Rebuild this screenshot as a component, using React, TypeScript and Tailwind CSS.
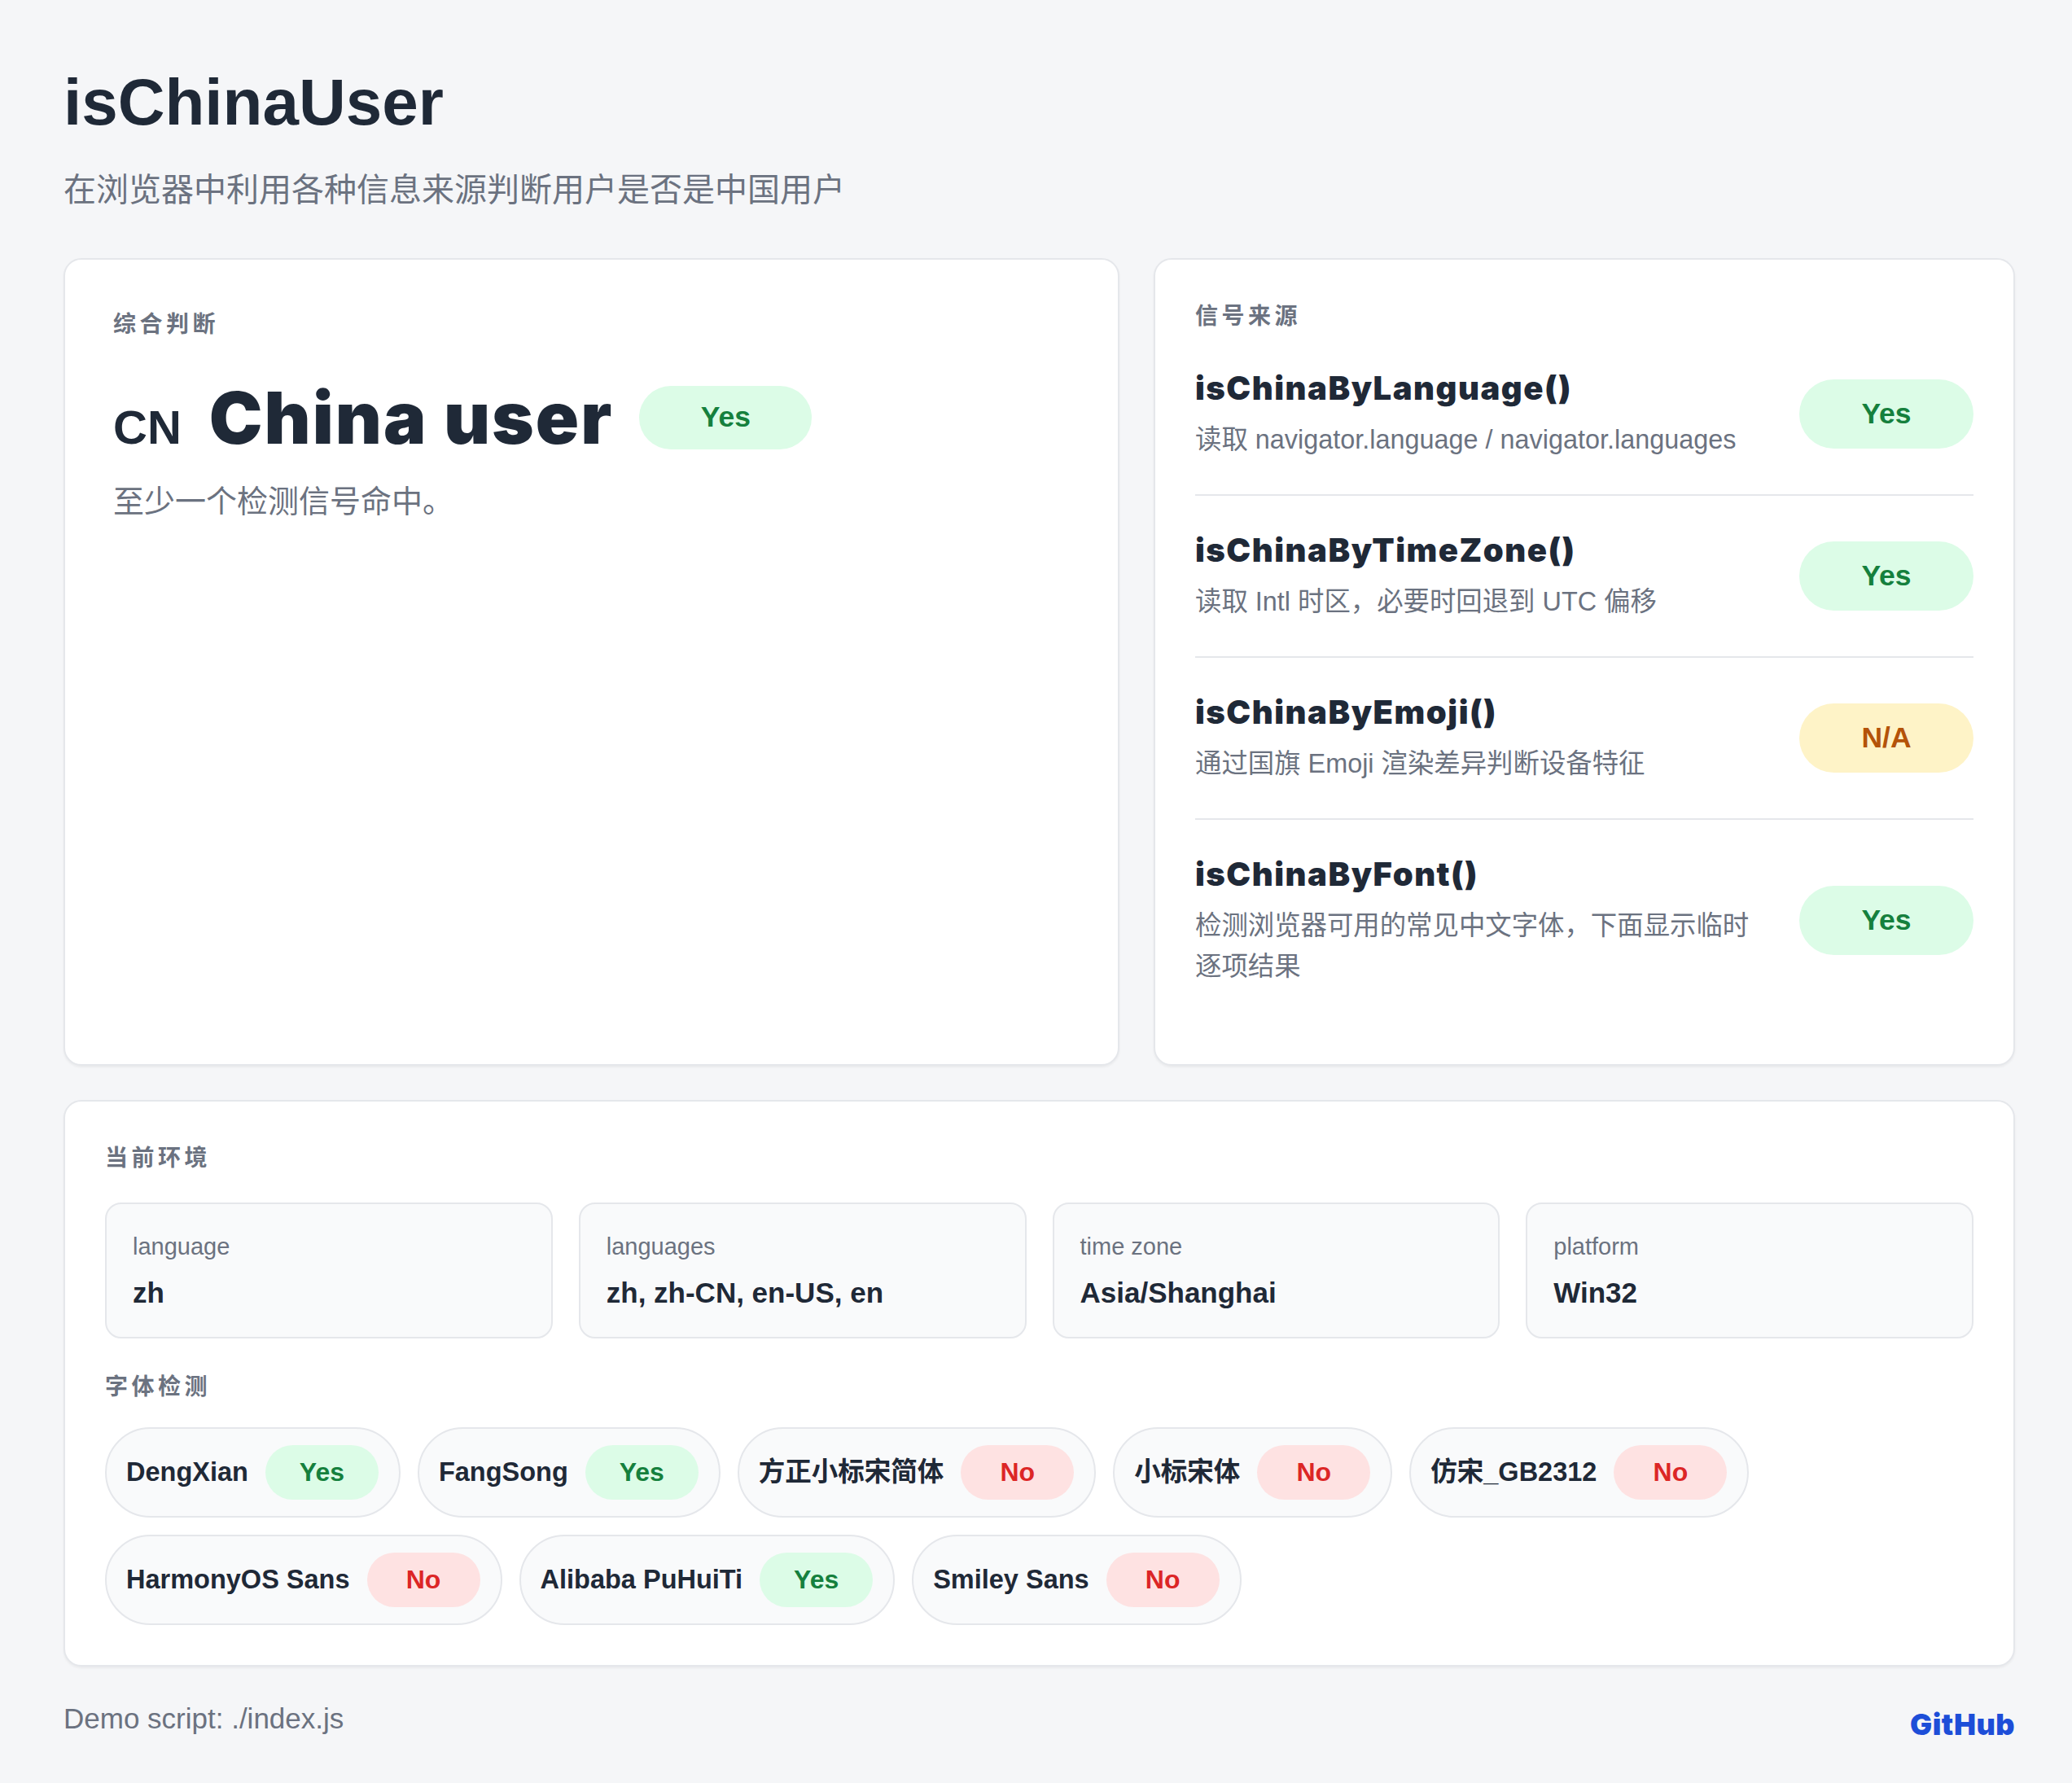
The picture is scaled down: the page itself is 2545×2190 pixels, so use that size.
import React from 'react';

type Verdict = 'yes' | 'no' | 'na';

const signals: { name: string; desc: string; verdict: Verdict }[] = [
    { name: 'isChinaByLanguage()', desc: '读取 navigator.language / navigator.languages', verdict: 'yes' },
    { name: 'isChinaByTimeZone()', desc: '读取 Intl 时区，必要时回退到 UTC 偏移', verdict: 'yes' },
    { name: 'isChinaByEmoji()', desc: '通过国旗 Emoji 渲染差异判断设备特征', verdict: 'na' },
    { name: 'isChinaByFont()', desc: '检测浏览器可用的常见中文字体，下面显示临时逐项结果', verdict: 'yes' },
];

const env = [
    { label: 'language', value: 'zh' },
    { label: 'languages', value: 'zh, zh-CN, en-US, en' },
    { label: 'time zone', value: 'Asia/Shanghai' },
    { label: 'platform', value: 'Win32' },
];

const fonts: { name: string; verdict: Verdict }[] = [
    { name: 'DengXian', verdict: 'yes' },
    { name: 'FangSong', verdict: 'yes' },
    { name: '方正小标宋简体', verdict: 'no' },
    { name: '小标宋体', verdict: 'no' },
    { name: '仿宋_GB2312', verdict: 'no' },
    { name: 'HarmonyOS Sans', verdict: 'no' },
    { name: 'Alibaba PuHuiTi', verdict: 'yes' },
    { name: 'Smiley Sans', verdict: 'no' },
];

const verdictText: Record<Verdict, string> = { yes: 'Yes', no: 'No', na: 'N/A' };
const verdictColor: Record<Verdict, string> = {
    yes: 'bg-[#dcfce7] text-[#15803d]',
    no: 'bg-[#fee2e2] text-[#dc2626]',
    na: 'bg-[#fef3c7] text-[#b45309]',
};

function Badge({ verdict, size }: { verdict: Verdict; size: 'lg' | 'md' | 'sm' }) {
    const dims =
        size === 'lg'
            ? 'h-[78px] w-[212px] text-[35.5px]'
            : size === 'md'
              ? 'h-[85px] w-[214px] text-[35.5px]'
              : 'h-[67px] w-[139px] text-[32px]';
    return (
        <span className={`flex shrink-0 items-center justify-center rounded-full font-bold leading-none ${dims} ${verdictColor[verdict]}`}>
            {verdictText[verdict]}
        </span>
    );
}

function Label({ children }: { children: React.ReactNode }) {
    return <div className="text-[28px] font-bold leading-[42px] tracking-[4.5px] text-[#6b7280]">{children}</div>;
}

function SummaryCard() {
    return (
        <div className="rounded-[22px] border-2 border-[#e5e7eb] bg-white p-[59px] shadow-[0_2px_3px_rgba(0,0,0,0.05)]">
            <Label>综合判断</Label>
            <div className="mt-[49px] flex items-baseline">
                <span className="mr-[34px] text-[58px] font-bold leading-none">CN</span>
                <span className="font-['Inter','Noto_Sans_CJK_SC',sans-serif] text-[88px] font-black leading-none tracking-[2px]">China user</span>
                <span className="ml-[32px] self-center">
                    <Badge verdict="yes" size="lg" />
                </span>
            </div>
            <p className="mt-[31px] text-[38px] leading-[57px] text-[#6b7280]">至少一个检测信号命中。</p>
        </div>
    );
}

function SignalsCard() {
    return (
        <div className="rounded-[22px] border-2 border-[#e5e7eb] bg-white px-[49px] pb-[53px] pt-[49px] shadow-[0_2px_3px_rgba(0,0,0,0.05)]">
            <Label>信号来源</Label>
            <div>
                {signals.map(s => (
                    <div key={s.name} className="flex items-center border-b-2 border-[#e5e7eb] py-[42px] last:border-b-0">
                        <div className="min-w-0 flex-1 pr-[44px]">
                            <div className="font-['Inter','Noto_Sans_CJK_SC',sans-serif] text-[40px] font-black leading-[50px] tracking-[1.5px]">{s.name}</div>
                            <div className="mt-[13px] text-[32.4px] leading-[50px] text-[#6b7280]">{s.desc}</div>
                        </div>
                        <Badge verdict={s.verdict} size="md" />
                    </div>
                ))}
            </div>
        </div>
    );
}

function EnvCard() {
    return (
        <div className="mt-[42px] rounded-[22px] border-2 border-[#e5e7eb] bg-white p-[49px] shadow-[0_2px_3px_rgba(0,0,0,0.05)]">
            <Label>当前环境</Label>
            <div className="mt-[33px] grid grid-cols-4 gap-[32px]">
                {env.map(e => (
                    <div key={e.label} className="rounded-[20px] border-2 border-[#e5e7eb] bg-[#f9fafb] px-[32px] pb-[30px] pt-[31px]">
                        <div className="text-[29px] leading-[43.5px] text-[#6b7280]">{e.label}</div>
                        <div className="mt-[9px] text-[35px] font-bold leading-[49px]">{e.value}</div>
                    </div>
                ))}
            </div>
            <div className="mt-[39px]">
                <Label>字体检测</Label>
            </div>
            <div className="mt-[28px] flex flex-wrap gap-[21px]">
                {fonts.map(f => (
                    <div key={f.name} className="flex items-center rounded-full border-2 border-[#e5e7eb] bg-[#f9fafb] py-[20px] pl-[24px] pr-[25px]">
                        <span className="text-[32.5px] font-bold leading-none">{f.name}</span>
                        <span className="ml-[21px]">
                            <Badge verdict={f.verdict} size="sm" />
                        </span>
                    </div>
                ))}
            </div>
        </div>
    );
}

export default function App() {
    return (
        <div className="min-h-screen bg-[#f5f6f8] font-['Liberation_Sans','Noto_Sans_CJK_SC',sans-serif] text-[#1f2937]">
            <div className="ml-[78px] w-[2397px] pb-[60px] pt-[78px]">
                <h1 className="text-[80px] font-bold leading-[1.2]">isChinaUser</h1>
                <p className="mt-[29px] text-[40px] leading-[60px] text-[#6b7280]">在浏览器中利用各种信息来源判断用户是否是中国用户</p>

                <div className="mt-[54px] grid grid-cols-[1297px_1fr] gap-[42px]">
                    <SummaryCard />
                    <SignalsCard />
                </div>

                <EnvCard />

                <footer className="mt-[38px] flex items-start justify-between">
                    <span className="text-[35px] leading-[1.5] text-[#6b7280]">Demo script: ./index.js</span>
                    <a className="mt-[6px] font-['Inter',sans-serif] text-[36px] font-black leading-[1.5] tracking-[0.5px] text-[#1d4ed8]">GitHub</a>
                </footer>
            </div>
        </div>
    );
}
